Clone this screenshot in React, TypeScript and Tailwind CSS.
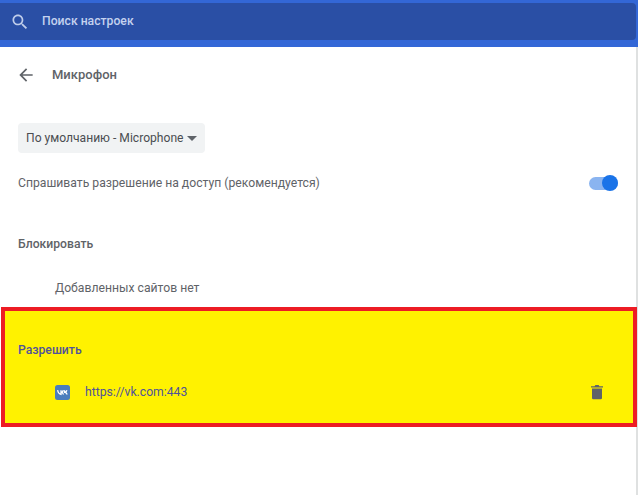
function SearchIcon() {
  return (
    <svg width="20" height="20" viewBox="0 0 24 24" fill="#bfcdea">
      <path d="M15.500 14h-.79l-.28-.27C15.410 12.590 16 11.110 16 9.500 16 5.910 13.090 3 9.500 3S3 5.910 3 9.500 5.910 16 9.500 16c1.610 0 3.090-.59 4.230-1.570l.27.28v.79l5 4.990L20.490 19l-4.990-5zm-6 0C7.010 14 5 11.990 5 9.500S7.010 5 9.500 5 14 7.010 14 9.500 11.990 14 9.500 14z" />
    </svg>
  );
}

function BackIcon() {
  return (
    <svg width="20" height="20" viewBox="0 0 24 24" fill="#5f6368">
      <path d="M20 11H7.830l5.590-5.590L12 4l-8 8 8 8 1.410-1.410L7.830 13H20v-2z" />
    </svg>
  );
}

function VkIcon() {
  return (
    <svg width="15" height="15" viewBox="0 0 15 15">
      <rect width="15" height="15" rx="2.500" fill="#4a7dbd" />
      <path
        d="M2.600 5.200c.5 2.400 1.700 4 3.400 4.200V5.200M6 7.400c1.200 0 2-1 2.400-2.200M6.400 7.400c1 .2 1.700 1 2.100 2"
        fill="none"
        stroke="#fff"
        strokeWidth="1.300"
      />
      <path
        d="M9.500 5.200v2.200c1.200 0 2-1 2.400-2.200M9.900 7.400c1 .2 1.900 1 2.300 2"
        fill="none"
        stroke="#fff"
        strokeWidth="1.300"
      />
    </svg>
  );
}

function TrashIcon() {
  return (
    <svg width="14" height="16" viewBox="0 0 14 16" fill="#5f6368">
      <path d="M1 2.200h3.600L5.400 1h3.200l.8 1.200H13v1.300H1z" />
      <path d="M2 4.500h10V14a1.300 1.300 0 0 1-1.300 1.300H3.300A1.300 1.300 0 0 1 2 14z" />
    </svg>
  );
}

export default function App() {
  return (
    <div className="w-[639px] h-[495px] overflow-hidden bg-white font-['Roboto',sans-serif] text-[12.2px] text-[#5f6368]">
      <header className="h-[47px] w-[638px] pt-[3px] pb-[7px] bg-[#3367d6]">
        <div className="h-[37px] w-[636px] flex items-center rounded-r-sm bg-[#2a4fa5] pl-[10px] gap-[12px] text-[#c4d2ef]">
          <SearchIcon />
          <span className="font-medium">Поиск настроек</span>
        </div>
      </header>

      <div className="flex">
        <main className="w-[636px] shrink-0">
          <div className="flex items-center h-[55px] pl-[16px] gap-[16px]">
            <BackIcon />
            <span className="text-[13px] font-medium">Микрофон</span>
          </div>

          <div className="pl-[18px] mt-[21px]">
            <div className="inline-flex items-center h-[30px] w-[187px] pl-2 gap-[4px] rounded bg-[#f1f3f4] text-[#4a4d51]">
              <span className="text-[12.1px]">По умолчанию - Microphone</span>
              <span className="border-x-[5px] border-t-[5px] border-x-transparent border-t-[#5f6368]" />
            </div>
          </div>

          <div className="flex items-center justify-between h-[30px] mt-[15px] pl-[18px] pr-[18px]">
            <span>Спрашивать разрешение на доступ (рекомендуется)</span>
            <div className="relative w-[29px] h-[13px] rounded-full bg-[#8ab4f0]">
              <span className="absolute right-0 top-[-1.500px] w-4 h-4 rounded-full bg-[#1a73e8]" />
            </div>
          </div>

          <div className="pl-[18px] mt-[39px] font-medium leading-[15px]">Блокировать</div>
          <div className="pl-[55px] mt-[29px] leading-[15px]">Добавленных сайтов нет</div>

          <section className="relative mt-[11px] ml-px w-[636px] h-[120px] border-4 border-[#ed1c24] bg-[#fff200] text-[#50529a]">
            <div className="pl-[13px] pt-[32px] font-medium leading-[15px]">Разрешить</div>
            <div className="flex items-center mt-[25px] pl-[50px] pr-[29px]">
              <VkIcon />
              <span className="ml-[15px]">https://vk.com:443</span>
              <span className="ml-auto flex">
                <TrashIcon />
              </span>
            </div>
          </section>
        </main>
        <div className="w-[2px] h-[448px] bg-[#dfe1e1]" />
      </div>
    </div>
  );
}
